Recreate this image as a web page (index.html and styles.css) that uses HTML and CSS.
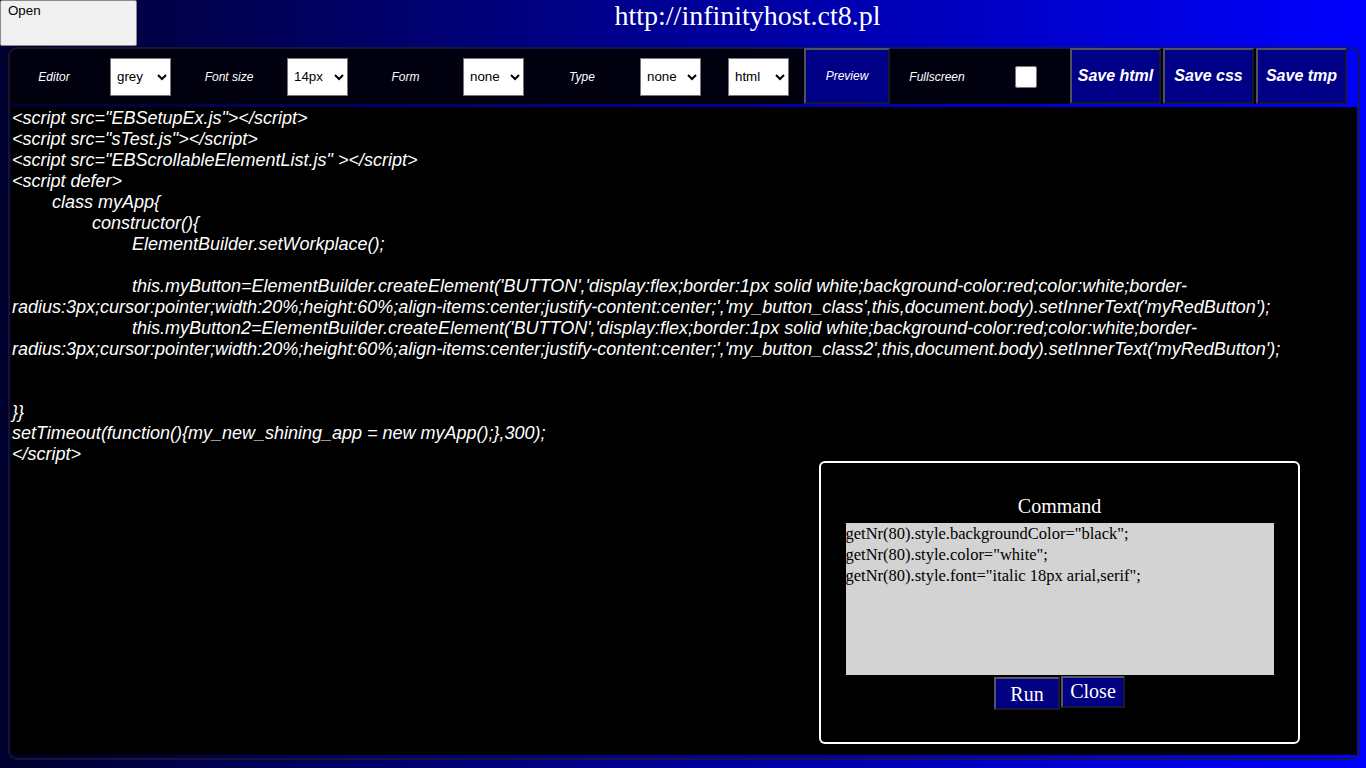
FILE: index.html
```html
<!DOCTYPE html>
<html>
    <head>
        <meta charset="utf-8">
        <title>Editor</title>
        <link rel="stylesheet" href="styles.css">
    </head>
    <body>
        <div class="top">
            <div class="open">Open</div>
            <div class="title">http://infinityhost.ct8.pl</div>
        </div>
        <div class="panel">
            <div class="tools">
                <div class="label lab1">Editor</div>
                <select class="sel"><option>grey</option></select>
                <div class="label">Font size</div>
                <select class="sel"><option>14px</option></select>
                <div class="label lab-form">Form</div>
                <select class="sel"><option>none</option></select>
                <div class="label">Type</div>
                <select class="sel"><option>none</option></select>
                <select class="sel sel-html"><option>html</option></select>
                <div class="btn preview">Preview</div>
                <div class="label full">Fullscreen</div>
                <div class="check-cell"><input type="checkbox" class="check"></div>
                <div class="btn save">Save html</div>
                <div class="btn save">Save css</div>
                <div class="btn save">Save tmp</div>
            </div>
            <div class="editor">&lt;script src="EBSetupEx.js"&gt;&lt;/script&gt;
&lt;script src="sTest.js"&gt;&lt;/script&gt;
&lt;script src="EBScrollableElementList.js" &gt;&lt;/script&gt;
&lt;script defer&gt;
&#9;class myApp{
&#9;&#9;constructor(){
&#9;&#9;&#9;ElementBuilder.setWorkplace();

&#9;&#9;&#9;this.myButton=ElementBuilder.createElement('BUTTON','display:flex;border:1px solid white;background-color:red;color:white;border-radius:3px;cursor:pointer;width:20%;height:60%;align-items:center;justify-content:center;','my_button_class',this,document.body).setInnerText('myRedButton');
&#9;&#9;&#9;this.myButton2=ElementBuilder.createElement('BUTTON','display:flex;border:1px solid white;background-color:red;color:white;border-radius:3px;cursor:pointer;width:20%;height:60%;align-items:center;justify-content:center;','my_button_class2',this,document.body).setInnerText('myRedButton');


}}
setTimeout(function(){my_new_shining_app = new myApp();},300);
&lt;/script&gt;</div>
            <div class="dialog">
                <div class="dlg-title">Command</div>
                <textarea class="cmd">getNr(80).style.backgroundColor="black";
getNr(80).style.color="white";
getNr(80).style.font="italic 18px arial,serif";</textarea>
                <div class="dlg-buttons">
                    <div class="dbtn run">Run</div>
                    <div class="dbtn close">Close</div>
                </div>
            </div>
        </div>
    </body>
</html>
```
FILE: styles.css
```css
html, body{
    height: 100%;
}
body{
    margin: 0;
    background: linear-gradient(to right, #000030, #0000ff);
    font-family: "Liberation Sans", Arial, sans-serif;
    overflow: hidden;
}
.top{
    display: flex;
    height: 46px;
}
.open{
    box-sizing: border-box;
    width: 137px;
    height: 46px;
    background-color: #f0f0f0;
    border: 1px solid #8a8a8a;
    border-radius: 2px;
    padding: 2px 7px;
    font-size: 13.33px;
    color: #000;
}
.title{
    flex: 1;
    text-align: center;
    padding-right: 8px;
    font-family: "Liberation Serif", "Times New Roman", serif;
    font-size: 28px;
    color: #fff;
}
.panel{                                     /*editor window*/
    position: relative;
    margin: 1px 6px 0 8px;
    height: 709px;
    border: 2px solid rgba(30,30,40,0.75);
    border-radius: 9px;
}
.tools{
    display: flex;
    align-items: center;
    width: fit-content;
    height: 55px;
    background-color: #00000f;
    border-top-left-radius: 7px;
}
.label{
    width: 116px;
    text-align: center;
    font-size: 12px;
    font-style: italic;
    color: #fff;
}
.lab1{
    width: 88px;
    margin-right: 12px;
}
.lab-form{
    width: 115px;
}
.full{
    width: 94px;
}
.sel{
    width: 61px;
    height: 38px;
    border: 1px solid #767676;
    border-radius: 0;
    background-color: #fff;
    font-family: "Liberation Sans", Arial, sans-serif;
    font-size: 13.33px;
    color: #000;
    padding-left: 2px;
}
.sel-html{
    margin-left: 27px;
}
.btn{
    box-sizing: border-box;
    align-self: stretch;
    display: flex;
    align-items: center;
    justify-content: center;
    margin-top: -1px;
    background-color: #000086;
    border: 2px solid;
    border-color: #505060 #18182a #18182a #505060;
    color: #fff;
    font-style: italic;
}
.preview{
    width: 86px;
    margin-left: 15px;
    font-size: 12px;
}
.check-cell{
    width: 84px;
    display: flex;
    justify-content: center;
}
.check{
    width: 22px;
    height: 22px;
    margin: 0;
}
.save{
    width: 91px;
    margin-left: 2px;
    font-size: 16px;
    font-weight: bold;
}
.editor{
    box-sizing: border-box;
    margin: 3px 1px 0 1px;
    height: 648px;
    background-color: #000;
    padding: 1px 1px 1px 1px;
    color: #fff;
    font-size: 18px;
    font-style: italic;
    line-height: 21px;
    white-space: pre-wrap;
    tab-size: 8;
}
.dialog{                                    /*command window over the editor*/
    position: absolute;
    left: 809px;
    top: 412px;
    width: 477px;
    height: 279px;
    border: 2px solid #fff;
    border-radius: 6px;
    background-color: #000;
    display: flex;
    flex-direction: column;
    align-items: center;
    font-family: "Liberation Serif", "Times New Roman", serif;
}
.dlg-title{
    margin-top: 32px;
    color: #fff;
    font-size: 20px;
    line-height: 23px;
}
.cmd{
    box-sizing: border-box;
    margin-top: 5px;
    width: 428px;
    height: 152px;
    border: none;
    background-color: #d3d3d3;
    padding: 0;
    resize: none;
    font-family: "Liberation Serif", "Times New Roman", serif;
    font-size: 16.5px;
    line-height: 21px;
    color: #000;
}
.dlg-buttons{
    display: flex;
    align-items: flex-start;
    margin-top: 1px;
}
.dbtn{
    box-sizing: border-box;
    background-color: #000080;
    border: 2px solid;
    border-color: #55556a #1a1a2a #1a1a2a #55556a;
    color: #fff;
    font-size: 20px;
    text-align: center;
}
.run{
    width: 66px;
    height: 33px;
    margin-top: 1px;
    line-height: 31px;
    margin-right: 1px;
}
.close{
    width: 64px;
    height: 32px;
    line-height: 26px;
}
```
